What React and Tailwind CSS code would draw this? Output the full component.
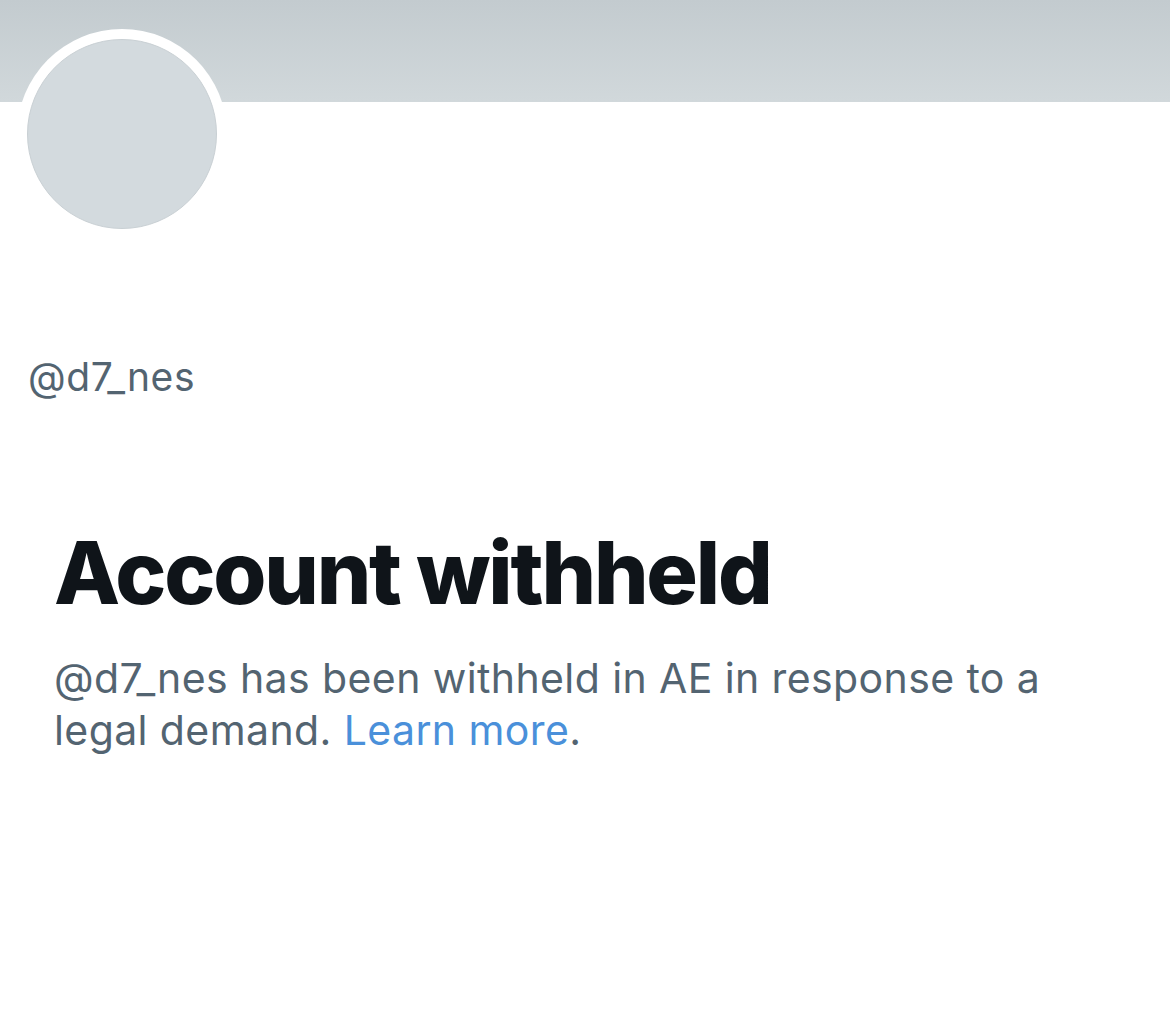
export default function App() {
  return (
    <div className="relative min-h-[1032px] w-[1170px] bg-white" style={{ fontFamily: 'Inter, "Liberation Sans", sans-serif' }}>
      {/* banner */}
      <div className="h-[102px] bg-gradient-to-b from-[#c3cbcf] to-[#d1d8db]" />

      {/* avatar */}
      <div className="absolute left-[17px] top-[29px] h-[210px] w-[210px] rounded-full bg-white p-[10px]">
        <div className="h-full w-full rounded-full border border-[#c9d0d4] bg-[#d3dade]" />
      </div>

      <div className="mt-[253px] pl-[28px] text-[39px] leading-[44px] tracking-[0.6px] text-[#536471]">@d7_nes</div>

      <div className="mt-[131px] pl-[54px]">
        <h1 className="text-[86px] font-extrabold leading-[86px] tracking-[-2.2px] text-[#0f1419]">
          Account withheld
        </h1>
        <p className="mt-[36px] max-w-[1000px] text-[41px] leading-[52px] tracking-[0.4px] text-[#536471]">
          @d7_nes has been withheld in AE in response to a legal demand.{' '}
          <a href="#" className="text-[#4a90da]">Learn more</a>.
        </p>
      </div>
    </div>
  );
}
